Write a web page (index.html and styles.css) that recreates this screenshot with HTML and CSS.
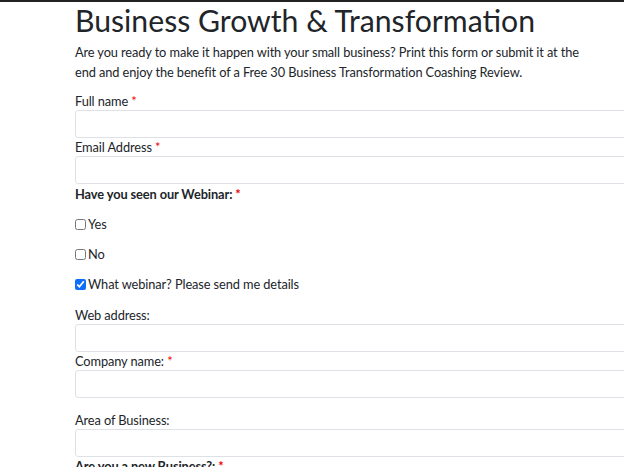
FILE: index.html
```html
<!DOCTYPE html>
<html lang="en">
<head>
<meta charset="utf-8">
<title>Business Growth &amp; Transformation</title>
<link rel="stylesheet" href="styles.css">
</head>
<body>
<div class="page">
  <h1 class="title">Business Growth &amp; Transformation</h1>
  <p class="intro">Are you ready to make it happen with your small business? Print this form or submit it at the end and enjoy the benefit of a Free 30 Business Transformation Coashing Review.</p>
  <form class="form">
    <label class="label">Full name <span class="req">*</span></label>
    <input class="input" type="text">
    <label class="label">Email Address <span class="req">*</span></label>
    <input class="input" type="email">
    <div class="label bold q">Have you seen our Webinar: <span class="req">*</span></div>
    <label class="check"><input type="checkbox" class="box"> Yes</label>
    <label class="check"><input type="checkbox" class="box"> No</label>
    <label class="check"><input type="checkbox" class="box" checked> What webinar? Please send me details</label>
    <label class="label web">Web address:</label>
    <input class="input" type="text">
    <label class="label">Company name: <span class="req">*</span></label>
    <input class="input" type="text">
    <label class="label area">Area of Business:</label>
    <input class="input" type="text">
    <div class="label bold">Are you a new Business?: <span class="req">*</span></div>
  </form>
</div>
</body>
</html>
```
FILE: styles.css
```css
html { overflow: hidden; }
body {
  margin: 0;
  border-top: 2px solid #222;
  font-family: "Lato", "Noto Sans", sans-serif;
  color: #212529;
  font-size: 12.8px;
  letter-spacing: -0.1px;
  line-height: 19.5px;
  background: #fff;
}
.page { padding-left: 75px; }
.title {
  margin: 0;
  font-weight: 400;
  font-size: 30.2px;
  letter-spacing: 0;
  line-height: 36px;
}
.intro { margin: 5px 0 10px; width: 512px; }
.form { display: flex; flex-direction: column; align-items: flex-start; }
.label { display: block; height: 18px; line-height: 18px; }
.bold { font-weight: 700; }
.req { color: #e00; }
.input {
  display: block;
  width: 620px;
  height: 28px;
  box-sizing: border-box;
  margin: 0;
  border: 1px solid #dee2e6;
  border-radius: 3px;
  background: #fff;
}
.q { margin-top: 1px; margin-bottom: 12px; }
.check {
  display: flex;
  align-items: center;
  height: 19.5px;
  margin-bottom: 10.5px;
}
.box {
  width: 11px;
  height: 11px;
  margin: 0 2px 0 0;
  accent-color: #0d6efd;
}
.web { margin-top: 1px; }
.area { margin-top: 13px; }
```
